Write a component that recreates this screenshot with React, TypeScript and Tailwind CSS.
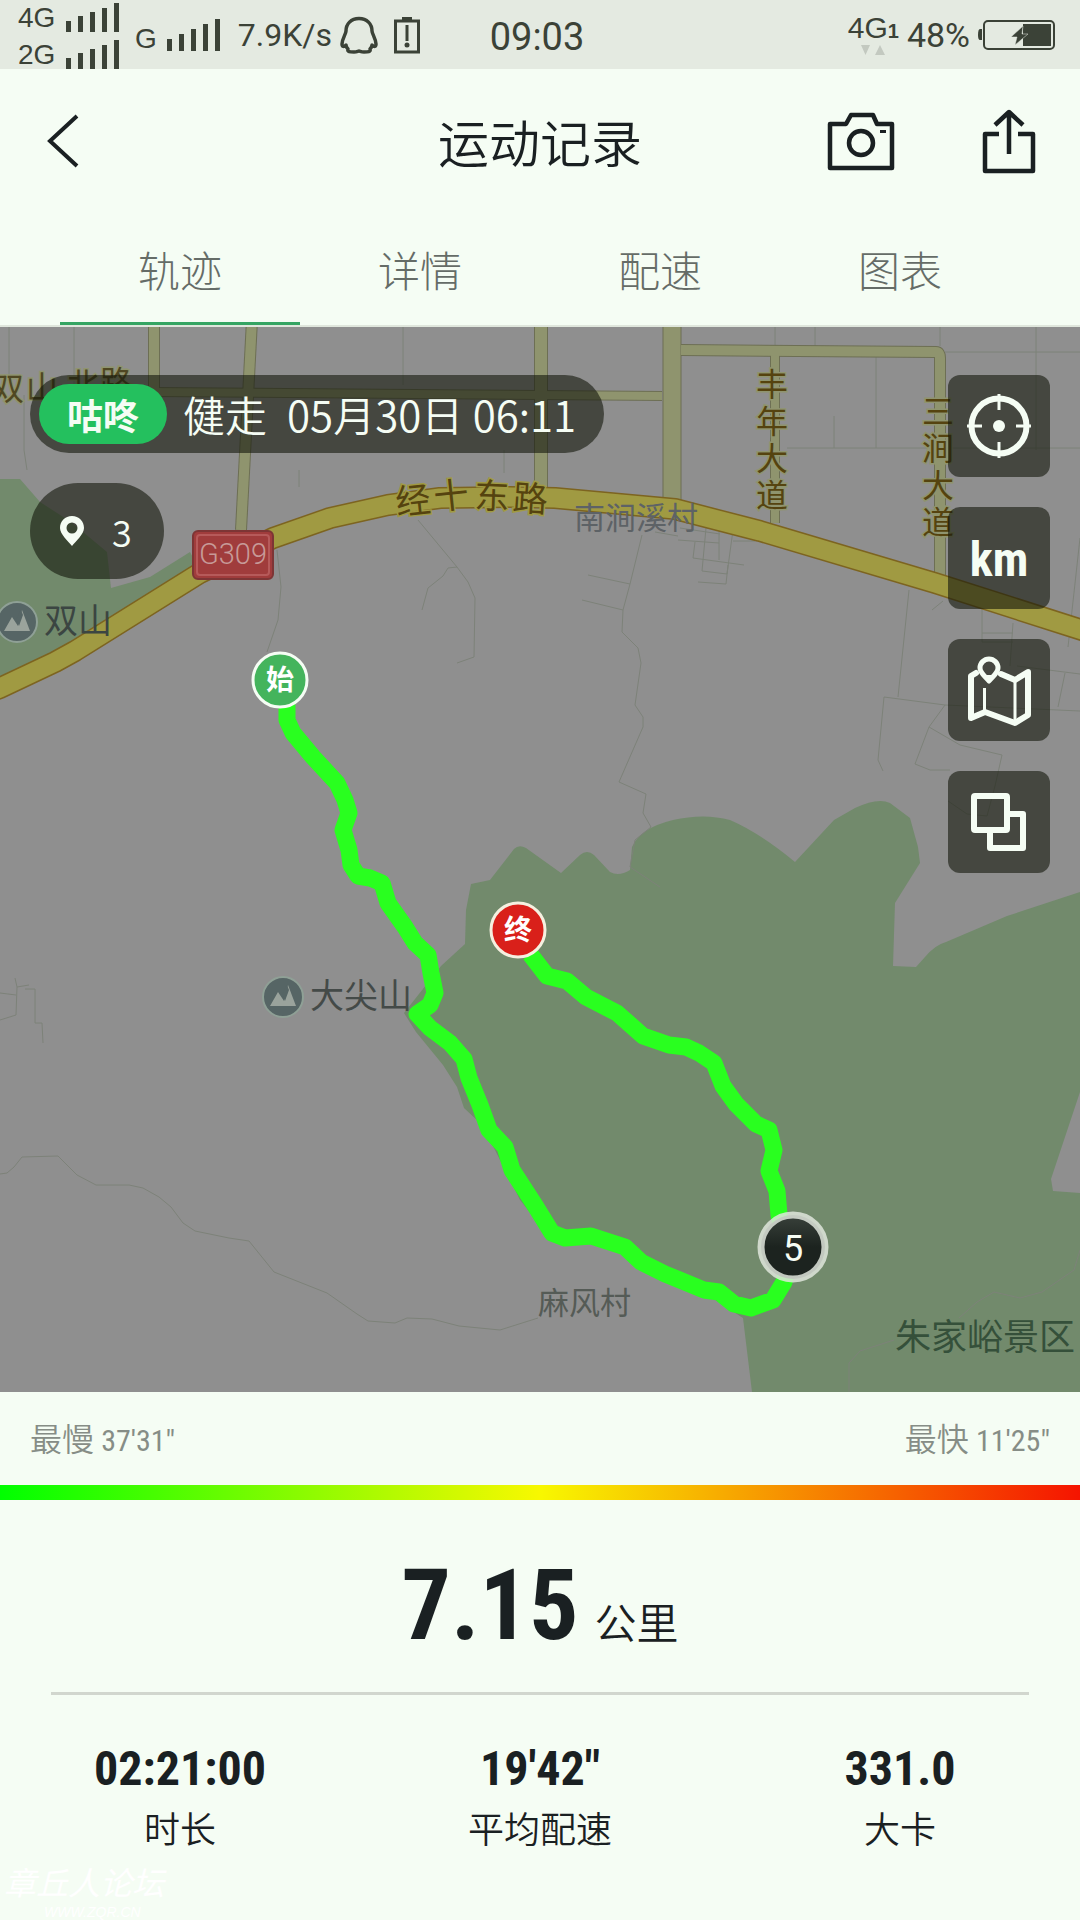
import { useState } from "react";

const tabs = ["轨迹", "详情", "配速", "图表"];

const stats = [
  { value: "02:21:00", label: "时长" },
  { value: "19'42\"", label: "平均配速" },
  { value: "331.0", label: "大卡" },
];

const digits = "font-['Roboto_Condensed',Roboto,sans-serif]";

// main trunk road, drawn twice (edge + fill)
const trunk =
  "M-5 690 L0 688 L55 662 L75 651 L200 573 L273 538 L330 518 L388 505 L440 498 L510 497 L555 498 L675 509 L760 531 L935 583 L1085 631";

const sideRoads = [
  { d: "M154 320 V393", w: 10 },
  { d: "M252 320 L241 530", w: 10 },
  { d: "M541 320 V490", w: 12 },
  { d: "M150 392 L662 396", w: 8 },
  { d: "M775 351 V523", w: 8 },
  { d: "M681 350 L936 352 Q940 352 940 358 V577", w: 10 },
  { d: "M672 320 V500", w: 17 },
];

const lanes = [
  "M9 327 V375 M74 327 V420 M403 327 V385 M299 470 V487 M504 450 V473 M24 395 V450 L27 470",
  "M775 327 V346 M815 327 V346 M940 327 V346 M1036 327 V450 M945 352 H1080 M876 357 V448 M834 416 V448 M787 448 H1080",
  "M642 535 L630 584 L623 610 L622 632 L638 648 L641 663 L635 705 L643 717 L643 727 L619 782 L646 794 L643 813 L651 827 L635 840 L630 867 L660 887",
  "M588 575 L630 584 M582 600 L623 610",
  "M418 520 L457 567 L468 582 L475 598 L474 657 L457 663 M457 567 L448 568 L443 576 L428 588 L422 610",
  "M655 532 L678 536 M680 528 L720 534 M678 540 L719 543 M695 542 L693 558 L744 565 M706 528 L702 571 L727 574 L733 530 M719 530 V560 M733 541 H755 M698 582 L726 584 L728 565",
  "M909 590 L898 697 M1080 711 L945 705 L884 697 L878 760 L883 771 M945 705 L929 727 L915 764 L930 770 H950",
  "M929 727 L960 745 L1002 755 L995 786 L987 816 L967 814 L948 801 M1017 666 L1080 674 M1065 673 L1058 707 M1080 538 L1068 647",
  "M982 609 V642 M982 633 H1013 M982 642 H1013 M1013 623 L1010 666 M932 610 L943 601",
  "M277 550 L281 587 L278 620 L267 652",
  "M15 978 L17 987 L29 985 M17 987 L16 1015 L0 1020 M0 993 L16 995 M25 989 H35 V1023 H42 L43 1043",
  "M0 1174 L7 1173 L14 1167 L22 1157 L58 1156 L77 1175 L96 1185 H129 L143 1188 L159 1197 L171 1207 L183 1223 L195 1231 L229 1238 L249 1241 L274 1272 L327 1293 L357 1314 L368 1321 L395 1323 L407 1318 L432 1319 L459 1326 L500 1330 L538 1318",
  "M1080 1250 L1074 1270 L1042 1292 L1020 1298 L994 1292 L977 1302 L959 1318 M894 1340 L860 1351 L849 1363 V1392",
];

const park =
  "M752 1392 L743 1318 L700 1290 L630 1248 L550 1238 L520 1200 L495 1150 L480 1123 L464 1108 L457 1087 L443 1065 L416 1032 L404 1013 L441 966 L465 944 L466 910 L471 884 L490 880 L514 849 Q519 844 526 848 L561 873 L580 855 Q587 849 594 855 L610 872 Q619 877 630 870 L632 847 Q640 828 673 820 Q704 813 730 820 Q760 833 795 862 L834 820 L855 808 Q878 797 890 803 L910 818 L918 847 L920 863 L895 903 L893 966 L916 967 L925 957 Q935 945 946 942 L1007 916 L1080 892 V1092 L1051 1179 L1053 1191 L1080 1193 V1392 Z";

const route =
  "M286 690 L287 707 L287 720 L293 733 L313 757 L325 770 L337 783 L345 800 L349 813 L343 830 L349 850 L351 865 L358 876 L370 878 L382 883 L388 903 L405 927 L415 943 L428 955 L431 973 L435 993 L430 1005 L417 1014 L430 1028 L450 1043 L464 1059 L469 1078 L480 1105 L489 1130 L505 1147 L512 1170 L536 1207 L552 1233 L565 1238 L591 1236 L625 1247 L641 1262 L665 1274 L704 1290 L719 1292 L734 1304 L751 1308 L773 1300 L784 1282 L789 1262 L779 1215 L777 1191 L769 1171 L774 1150 L769 1130 L756 1124 L736 1104 L723 1086 L714 1063 L699 1053 L686 1047 L669 1045 L643 1036 L617 1013 L586 997 L567 981 L547 976 L530 954";

function Bars({ heights }: { heights: number[] }) {
  return (
    <svg width="53" height="32" viewBox="0 0 53 32" fill="#3b4237">
      {heights.map((h, i) => (
        <rect key={i} x={i * 12} y={32 - h} width="5" height={h} />
      ))}
    </svg>
  );
}

function StatusBar() {
  return (
    <div className="flex h-[69px] items-center bg-[#e4eae1] px-[18px] font-[Roboto,'Liberation_Sans',sans-serif] text-[32px] leading-none text-[#3b4237]">
      <div className="flex flex-1 items-center">
        <div className="flex flex-col gap-px font-['Liberation_Sans',sans-serif] text-[28px] leading-8">
          <div className="flex items-center gap-2.5">
            <span className="w-[38px] pt-1">4G</span>
            <Bars heights={[11, 16, 20, 24, 29]} />
          </div>
          <div className="flex items-center gap-2.5">
            <span className="w-[38px] pt-1">2G</span>
            <Bars heights={[11, 16, 20, 24, 29]} />
          </div>
        </div>
        <span className="ml-4 mt-2 font-['Liberation_Sans',sans-serif] text-[28px]">G</span>
        <span className="ml-2.5">
          <Bars heights={[12, 17, 22, 27, 32]} />
        </span>
        <span className="ml-[18px]">7.9K/s</span>
        {/* penguin */}
        <svg className="ml-2" width="38" height="38" viewBox="0 0 38 38" fill="none" stroke="#3b4237" strokeWidth="3.5" strokeLinejoin="round">
          <path d="M19 2.500C11 2.500 6 8 6 15C6 18 2 23 2 28C2 31 4 31 6 29C6 31 7 32 8 33C7 36 10 36 14 36C17 36 18 35 19 35C20 35 21 36 24 36C28 36 31 36 30 33C31 32 32 31 32 29C34 31 36 31 36 28C36 23 32 18 32 15C32 8 27 2.500 19 2.500Z" />
        </svg>
        <svg className="ml-4" width="26" height="38" viewBox="0 0 26 38" fill="#3b4237">
          <rect x="8" y="1" width="10" height="4" />
          <rect x="1.500" y="5" width="23" height="31" fill="none" stroke="#3b4237" strokeWidth="3" />
          <rect x="11.500" y="9" width="3" height="16" />
          <circle cx="13" cy="29" r="2.500" />
        </svg>
      </div>
      <span className="pt-1 text-[38px]">09:03</span>
      <div className="flex flex-1 items-center justify-end pr-1.5">
        <div className="flex flex-col items-center">
          <span className="font-['Liberation_Sans',sans-serif] text-[30px] leading-7">
            4G<b className="text-xl">1</b>
          </span>
          <svg width="24" height="10" viewBox="0 0 24 10" fill="#c3c9c0">
            <path d="M0 0H9L4.500 10Z M14 10H24L19 0Z" />
          </svg>
        </div>
        <span className="ml-2 text-[34px]">48%</span>
        <svg className="ml-2" width="78" height="32" viewBox="0 0 78 32" fill="#3b4237">
          <path d="M4 10H2Q0 10 0 16Q0 21 2 21H4Z" />
          <rect x="6" y="2" width="70" height="28" rx="4" fill="none" stroke="#3b4237" strokeWidth="2" />
          <rect x="45" y="5" width="28" height="22" />
          <path d="M45 7L33 18H39L37 26L50 15H44Z" stroke="#e4eae1" strokeWidth="0.500" />
        </svg>
      </div>
    </div>
  );
}

function Mountain({ x, y }: { x: number; y: number }) {
  return (
    <g transform={`translate(${x} ${y})`}>
      <circle r="20" fill="#566565" stroke="#8fa096" strokeWidth="2" />
      <path d="M-13 9L-5 -5L1 4L5 -12L13 9Z" fill="#9aa39c" />
      <path d="M-1 -3L4 -12L6 -7L2 4Z" fill="#566565" />
    </g>
  );
}

function TrackMap() {
  return (
    <svg className="block h-auto w-full font-['Noto_Sans_CJK_SC',sans-serif]" viewBox="0 327 1080 1065">
      <defs>
        <linearGradient id="kmFill" x1="0" y1="0" x2="0" y2="1">
          <stop offset="0" stopColor="#39413b" />
          <stop offset="0.5" stopColor="#1c231f" />
        </linearGradient>
      </defs>
      <rect y="327" width="1080" height="1065" fill="#8f8f8f" />
      <path d="M0 479H20L40 502L71 522L107 552L111 588L150 577L190 552L200 571L75 649L0 686Z" fill="#728a6c" />
      <path d={park} fill="#728a6c" />

      <g fill="none" stroke="#7d8279" strokeWidth="1">
        {lanes.map((d) => (
          <path key={d} d={d} />
        ))}
      </g>
      <g fill="none" stroke="#6d6f54">
        {sideRoads.map((r) => (
          <path key={r.d} d={r.d} strokeWidth={r.w + 2} />
        ))}
      </g>
      <g fill="none" stroke="#8f946e">
        {sideRoads.map((r) => (
          <path key={r.d} d={r.d} strokeWidth={r.w} />
        ))}
      </g>
      <path d={trunk} fill="none" stroke="#7d6420" strokeWidth="22" strokeLinejoin="round" />
      <path d={trunk} fill="none" stroke="#a09a42" strokeWidth="19" strokeLinejoin="round" />

      {/* road names */}
      <g fill="#55430f" fontSize="32" stroke="#8f946e" strokeWidth="3" paintOrder="stroke">
        <text x="-8 26 67 100" y="400 399 396 394" fill="#4f4722">双山北路</text>
        <text x="397 435 474 512" y="515 510 508 510" fontSize="35" rotate="-6 -6 2 4" stroke="#a09a42">经十东路</text>
        <text x="756 756 756 756" y="396 433 470 507">丰年大道</text>
        <text x="922 922 922 922" y="423 460 497 534">三涧大道</text>
      </g>
      <text x="574" y="529" fontSize="31" fill="#5d6266">南涧溪村</text>

      <rect x="193" y="531" width="80" height="48" rx="5" fill="#a03c3c" stroke="#7d3535" strokeWidth="2" />
      <rect x="197" y="535" width="72" height="40" rx="3" fill="none" stroke="#b65a5a" strokeWidth="2" />
      <text x="233" y="564" fontSize="29" textAnchor="middle" fill="#c79a98" className="font-[Roboto,sans-serif] font-light">G309</text>

      <Mountain x={17} y={622} />
      <Mountain x={283} y={997} />
      <text x="44" y="633" fontSize="34" fill="#3b4542">双山</text>
      <text x="310" y="1008" fontSize="34" fill="#444a48">大尖山</text>
      <text x="538" y="1314" fontSize="31" fill="#555b56">麻风村</text>
      <text x="895" y="1350" fontSize="36" fill="#35503a">朱家峪景区</text>

      <path d={route} fill="none" stroke="#29ff1f" strokeWidth="17" strokeLinejoin="round" />

      <g className="font-bold" fontSize="28" textAnchor="middle" fill="#fff">
        <circle cx="280" cy="680" r="27" fill="#44b45c" stroke="#f5fdf4" strokeWidth="3" />
        <text x="280" y="690">始</text>
        <circle cx="518" cy="930" r="27" fill="#d9201a" stroke="#f5f0e0" strokeWidth="3" />
        <text x="518" y="940">终</text>
      </g>
      <circle cx="793" cy="1247" r="32" fill="url(#kmFill)" stroke="#dfe5dc" strokeOpacity="0.85" strokeWidth="7" />
      <text x="793" y="1261" fontSize="36" textAnchor="middle" fill="#f5fdf4" className="font-[Roboto,sans-serif]">5</text>
    </svg>
  );
}

function MapButton({ label, children }: { label: string; children: React.ReactNode }) {
  return (
    <button aria-label={label} className="flex size-[102px] items-center justify-center rounded-xl bg-[#14170b]/60 text-[#f5fdf4]">
      {children}
    </button>
  );
}

export default function App() {
  const [active, setActive] = useState(0);

  return (
    <div className="relative min-h-screen bg-[#f5fdf4] font-['Noto_Sans_CJK_SC',sans-serif] text-[#1a2022]">
      <StatusBar />

      {/* header */}
      <header className="grid h-[146px] grid-cols-[1fr_auto_1fr] items-center px-11 pb-0.5">
        <button aria-label="返回" className="justify-self-start">
          <svg width="38" height="56" viewBox="0 0 38 56" fill="none" stroke="currentColor" strokeWidth="4">
            <path d="M33 3L6 28L33 53" />
          </svg>
        </button>
        <h1 className="text-[51px] font-[350] leading-none">运动记录</h1>
        <div className="flex items-center gap-[87px] justify-self-end">
          <button aria-label="拍照">
            <svg width="68" height="60" viewBox="0 0 68 60" fill="none" stroke="currentColor" strokeWidth="4.500" strokeLinejoin="round">
              <path d="M3 13H19L24 4H46L50 13H65V57H3Z" />
              <circle cx="34" cy="32" r="12" />
              <path d="M53 20.500H59" strokeWidth="3" />
            </svg>
          </button>
          <button aria-label="分享">
            <svg width="54" height="66" viewBox="0 0 54 66" fill="none" stroke="currentColor" strokeWidth="4.500" strokeLinejoin="round">
              <path d="M17 26H3V63H51V26H36" />
              <path d="M27 46V4M13 17L27 4L41 17" />
            </svg>
          </button>
        </div>
      </header>

      {/* tabs */}
      <div role="tablist" className="grid grid-cols-4 border-b-2 border-[#dfe6dc] px-[60px]">
        {tabs.map((tab, i) => (
          <button
            key={tab}
            role="tab"
            aria-selected={active === i}
            onClick={() => setActive(i)}
            className={
              active === i
                ? "h-[110px] border-b-3 border-[#35a563] text-[42px] font-light leading-none text-[#656c67]"
                : "h-[110px] border-b-3 border-transparent text-[42px] font-light leading-none text-[#656c67]"
            }
          >
            {tab}
          </button>
        ))}
      </div>

      <section className="relative">
        <TrackMap />
        <div className="absolute left-[30px] top-12 flex flex-col items-start gap-[30px] text-[#f5fdf4]">
          <div className="flex h-[78px] items-center rounded-full bg-[#14170b]/60 pl-[9px] pr-7 text-[42px] font-[350] leading-none">
            <span className="flex h-[60px] items-center rounded-full bg-[#24c05e] px-7 text-[36px] font-bold">咕咚</span>
            <span className="ml-4">健走</span>
            <span className="ml-5">05月30日 06:11</span>
          </div>
          <div className="flex h-24 items-center gap-7 rounded-full bg-[#14170b]/60 px-[30px] text-[36px] font-[350] leading-none">
            <svg width="24" height="30" viewBox="0 0 24 30" fill="currentColor" fillRule="evenodd">
              <path d="M12 0C5 0 0 5 0 12C0 18 8 25 12 30C16 25 24 18 24 12C24 5 19 0 12 0ZM12 6.500A5.500 5.500 0 1 1 12 17.500A5.500 5.500 0 1 1 12 6.500Z" />
            </svg>
            <span className="w-[22px]">3</span>
          </div>
        </div>

        <div className="absolute right-[30px] top-12 flex flex-col gap-[30px]">
          <MapButton label="定位">
            <svg width="66" height="66" viewBox="0 0 66 66" fill="none" stroke="currentColor">
              <circle cx="33" cy="33" r="27.500" strokeWidth="6" />
              <circle cx="33" cy="33" r="6" fill="currentColor" stroke="none" />
              <path d="M33 1V17M33 49V65M1 33H16M50 33H65" strokeWidth="3" />
            </svg>
          </MapButton>
          <MapButton label="公里标记">
            <span className={`${digits} pt-1 text-[48px] font-bold leading-none`}>km</span>
          </MapButton>
          <MapButton label="地图">
            <svg width="66" height="74" viewBox="0 0 66 74" fill="none" stroke="currentColor" strokeWidth="6" strokeLinejoin="round" strokeLinecap="round">
              <path d="M10 20L5 23V65L19 59L49 70L62 62V19L49 27L35 21" />
              <path d="M18.500 35V59M49 27V70" strokeWidth="3" strokeLinecap="butt" />
              <path d="M23 6A9 9 0 0 1 32 15C32 20 27 23 23 28C19 23 14 20 14 15A9 9 0 0 1 23 6Z" strokeWidth="5" />
              <path d="M19 23H27L23 29Z" fill="currentColor" strokeWidth="2" />
            </svg>
          </MapButton>
          <MapButton label="对比">
            <svg width="58" height="60" viewBox="0 0 58 60" fill="none" stroke="currentColor" strokeWidth="6" strokeLinejoin="round">
              <rect x="4" y="4" width="33" height="34" rx="1" />
              <path d="M37 22H53V56H20V38" />
            </svg>
          </MapButton>
        </div>
      </section>

      {/* pace legend */}
      <div className="flex h-[93px] items-center justify-between px-[30px] text-[32px] font-[350] leading-none text-[#868d86]">
        <p>
          最慢 <span className={`${digits} text-[30px] font-normal`}>37'31"</span>
        </p>
        <p>
          最快 <span className={`${digits} text-[30px] font-normal`}>11'25"</span>
        </p>
      </div>
      <div className="h-[15px] bg-linear-[to_right,#00ff00,#f8f800_50%,#f51400]" />

      <div className="mx-[51px] flex h-[195px] items-baseline justify-center gap-4 border-b-3 border-[#d1d6ce] pt-[46px]">
        <strong className={`${digits} text-[98px] leading-[120px]`}>7.15</strong>
        <span className="text-[42px] font-[350] leading-none">公里</span>
      </div>

      <dl className="grid grid-cols-3 pt-11 text-center">
        {stats.map((s) => (
          <div key={s.label} className="flex flex-col-reverse gap-1">
            <dt className="text-[36px] font-[350] leading-[48px]">{s.label}</dt>
            <dd className={`${digits} text-[48px] font-bold leading-[60px]`}>{s.value}</dd>
          </div>
        ))}
      </dl>

      <div className="absolute bottom-0 left-1 text-white italic">
        <p className="text-[32px] leading-[46px]">章丘人论坛</p>
        <p className="pl-10 font-['Liberation_Sans',sans-serif] text-sm leading-4">WWW.ZQR.CN</p>
      </div>
    </div>
  );
}
